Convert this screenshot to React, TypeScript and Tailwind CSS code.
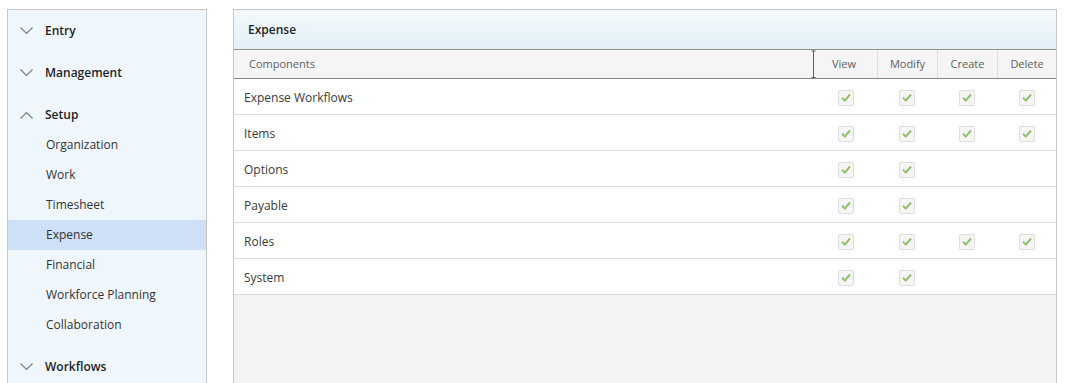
import { ReactNode } from 'react'

const font = { fontFamily: '"Open Sans", "Liberation Sans", sans-serif' }

const Chevron = ({ up }: { up?: boolean }) => (
  <svg width="13" height="8" viewBox="0 0 13 8" className="shrink-0">
    <path
      d={up ? 'M0.5 7.5 L6.5 1.5 L12.5 7.5' : 'M0.5 0.5 L6.5 6.5 L12.5 0.5'}
      fill="none"
      stroke="#7a7a7a"
      strokeWidth="1.1"
    />
  </svg>
)

const Heading = ({ label, up }: { label: string; up?: boolean }) => (
  <div className="flex h-[42px] items-center gap-[12px] pl-[12px] text-[12px] font-semibold text-[#1f1f1f]">
    <Chevron up={up} />
    <span>{label}</span>
  </div>
)

const SubItem = ({ label, active }: { label: string; active?: boolean }) => (
  <div
    className={`flex h-[30px] items-center pl-[38px] text-[12px] text-[#333] ${
      active ? 'bg-[#cde0f5]' : ''
    }`}
  >
    {label}
  </div>
)

const Check = () => (
  <div className="flex h-4 w-4 items-center justify-center rounded-[2px] border border-[#dedede] bg-[#f5f5f5]">
    <svg width="10" height="9" viewBox="0 0 10 9">
      <path d="M1 4.8 L3.8 7.5 L9 1.5" fill="none" stroke="#8fc271" strokeWidth="2" />
    </svg>
  </div>
)

const rows: { name: string; perms: boolean[] }[] = [
  { name: 'Expense Workflows', perms: [true, true, true, true] },
  { name: 'Items', perms: [true, true, true, true] },
  { name: 'Options', perms: [true, true, false, false] },
  { name: 'Payable', perms: [true, true, false, false] },
  { name: 'Roles', perms: [true, true, true, true] },
  { name: 'System', perms: [true, true, false, false] },
]

const PermCell = ({ w, children }: { w: string; children?: ReactNode }) => (
  <div className={`flex ${w} shrink-0 items-center justify-center`}>{children}</div>
)

export default function App() {
  return (
    <div className="flex h-[383px] items-start overflow-hidden bg-white pl-[7px] pt-[9px]" style={font}>
      <aside className="w-[200px] shrink-0 border border-[#c6c6c6] bg-[#eff7fc] pb-10">
        <Heading label="Entry" />
        <Heading label="Management" />
        <Heading label="Setup" up />
        <div className="-mt-1.5 pb-1.5">
          <SubItem label="Organization" />
          <SubItem label="Work" />
          <SubItem label="Timesheet" />
          <SubItem label="Expense" active />
          <SubItem label="Financial" />
          <SubItem label="Workforce Planning" />
          <SubItem label="Collaboration" />
        </div>
        <Heading label="Workflows" />
      </aside>

      <main className="ml-[26px] flex h-[420px] w-[824px] shrink-0 flex-col border border-[#c6c6c6] bg-[#f3f3f3]">
        <div className="flex h-[40px] items-center border-b border-[#8f8f8f] bg-gradient-to-b from-[#f4f9fc] to-[#e3f0f8] pl-[14px] text-[12px] font-semibold text-[#1f1f1f]">
          Expense
        </div>
        <div className="flex h-[29px] border-b border-[#8a8a8a] bg-[#f5f5f5] text-[11px] text-[#5e5e5e]">
          <div className="relative flex flex-1 items-center pl-[15px]">
            Components
            <svg width="5" height="29" viewBox="0 0 5 29" className="absolute right-[-3px] top-0">
              <path d="M2.5 0.5 V28 M0.5 1 H4.5 M0.5 27.5 H4.5" stroke="#5f6150" strokeWidth="1" fill="none" />
            </svg>
          </div>
          <PermCell w="w-[64px] pr-[2px]">View</PermCell>
          <PermCell w="w-[60px] border-l border-[#dedede]">Modify</PermCell>
          <PermCell w="w-[60px] border-l border-[#dedede]">Create</PermCell>
          <PermCell w="w-[59px] border-l border-[#dedede]">Delete</PermCell>
        </div>
        {rows.map((r) => (
          <div key={r.name} className="flex h-[36px] border-b border-[#dcdcdc] bg-white pt-[2px] text-[12px] text-[#3a3a3a]">
            <div className="flex flex-1 items-center pl-[10px]">{r.name}</div>
            <PermCell w="w-[64px] pl-[2px]">{r.perms[0] && <Check />}</PermCell>
            <PermCell w="w-[60px] pr-[1px]">{r.perms[1] && <Check />}</PermCell>
            <PermCell w="w-[60px] pr-[1px]">{r.perms[2] && <Check />}</PermCell>
            <PermCell w="w-[59px]">{r.perms[3] && <Check />}</PermCell>
          </div>
        ))}
      </main>
    </div>
  )
}
